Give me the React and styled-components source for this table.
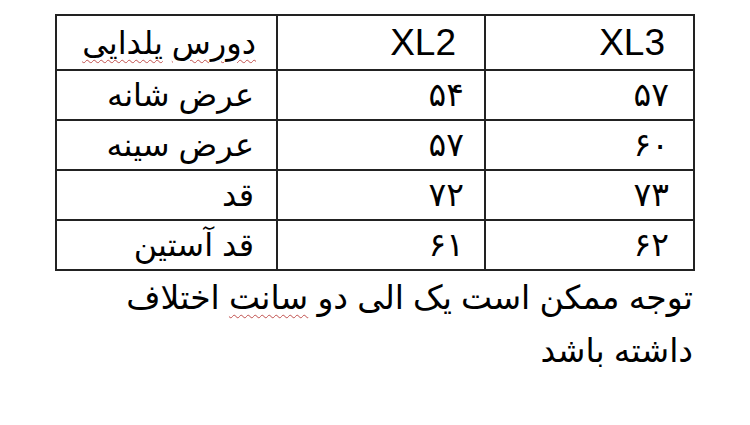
import React from "react";
import styled, { createGlobalStyle } from "styled-components";

const GlobalStyle = createGlobalStyle`
  body {
    margin: 0;
    background: #ffffff;
    font-family: "Liberation Sans", "DejaVu Sans", sans-serif;
    color: #000000;
  }
`;

const Page = styled.div`
  padding: 14px 0 0 55px;
  width: 638px;
`;

const SizeTable = styled.table`
  border-collapse: collapse;
  width: 638px;
  table-layout: fixed;
`;

const Cell = styled.td`
  border: 2px solid #222;
  height: ${props => (props.head ? "53px" : "48px")};
  padding: 0 ${props => props.pad}px 0 0;
  text-align: right;
  direction: rtl;
  vertical-align: middle;
  font-family: ${props =>
    props.num
      ? '"Liberation Serif", "DejaVu Serif", "DejaVu Sans", serif'
      : '"Liberation Sans", "DejaVu Sans", sans-serif'};
  font-size: ${props => (props.latin ? "37px" : props.num ? "33px" : "32px")};
  line-height: 1;
`;

const Misspelled = styled.span`
  text-decoration: underline wavy #c0504d;
  text-decoration-thickness: 1px;
  text-underline-offset: 5px;
`;

const Note = styled.p`
  margin: 0;
  direction: rtl;
  text-align: right;
  font-size: 33px;
  line-height: 53px;
`;

const rows = [
  ["عرض شانه", "۵۴", "۵۷"],
  ["عرض سینه", "۵۷", "۶۰"],
  ["قد", "۷۲", "۷۳"],
  ["قد آستین", "۶۱", "۶۲"],
];

export default function App() {
  return (
    <>
      <GlobalStyle />
      <Page>
        <SizeTable>
          <colgroup>
            <col style={{ width: "221px" }} />
            <col style={{ width: "208px" }} />
            <col style={{ width: "209px" }} />
          </colgroup>
          <tbody>
            <tr>
              <Cell head pad={20}>
                <Misspelled>دورس</Misspelled> <Misspelled>یلدایی</Misspelled>
              </Cell>
              <Cell head latin pad={28}>XL2</Cell>
              <Cell head latin pad={28}>XL3</Cell>
            </tr>
            {rows.map(([label, a, b]) => (
              <tr key={label}>
                <Cell pad={22}>{label}</Cell>
                <Cell num pad={20}>{a}</Cell>
                <Cell num pad={24}>{b}</Cell>
              </tr>
            ))}
          </tbody>
        </SizeTable>
        <Note>
          توجه ممکن است یک الی دو <Misspelled>سانت</Misspelled> اختلاف داشته باشد
        </Note>
      </Page>
    </>
  );
}
